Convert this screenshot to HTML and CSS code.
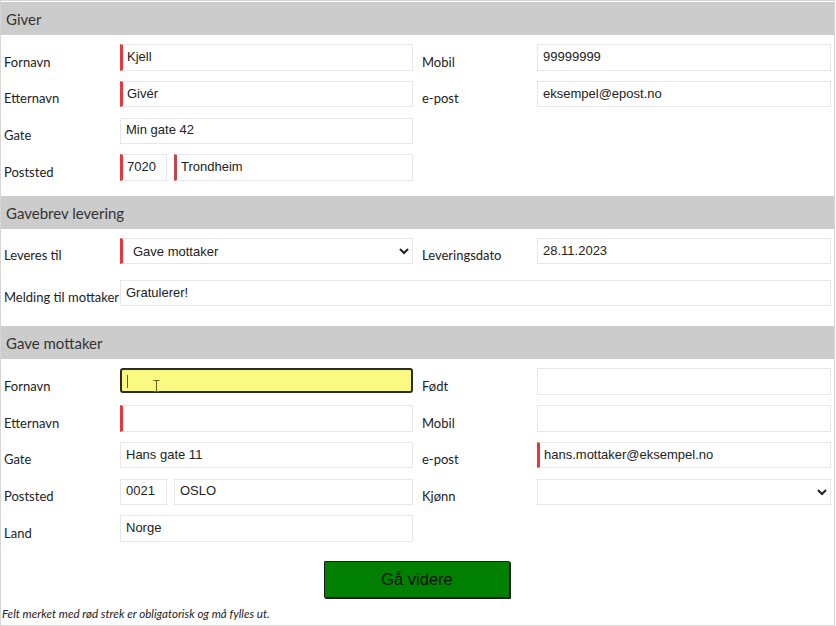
FILE: index.html
```html
<!DOCTYPE html>
<html lang="no">
<head>
<meta charset="utf-8">
<title>Gavebrev</title>
<link rel="stylesheet" href="styles.css">
</head>
<body>
<div class="sheet">
  <section class="sec">
    <h2 class="sec-title">Giver</h2>
    <div class="grid">
      <label class="lbl">Fornavn</label>
      <input class="fld req" type="text" value="Kjell">
      <label class="lbl lbl-r">Mobil</label>
      <input class="fld" type="text" value="99999999">

      <label class="lbl">Etternavn</label>
      <input class="fld req" type="text" value="Givér">
      <label class="lbl lbl-r">e-post</label>
      <input class="fld" type="text" value="eksempel@epost.no">

      <label class="lbl">Gate</label>
      <input class="fld" type="text" value="Min gate 42">

      <label class="lbl">Poststed</label>
      <div class="post">
        <input class="fld req zip" type="text" value="7020">
        <input class="fld req req-dark" type="text" value="Trondheim">
      </div>
    </div>
  </section>

  <section class="sec">
    <h2 class="sec-title">Gavebrev levering</h2>
    <div class="grid grid-lev">
      <label class="lbl">Leveres til</label>
      <select class="fld sel req">
        <option>Gave mottaker</option>
      </select>
      <label class="lbl lbl-r">Leveringsdato</label>
      <input class="fld" type="text" value="28.11.2023">

      <label class="lbl lbl-wide">Melding til mottaker</label>
      <input class="fld wide" type="text" value="Gratulerer!">
    </div>
  </section>

  <section class="sec">
    <h2 class="sec-title">Gave mottaker</h2>
    <div class="grid grid-mot">
      <label class="lbl">Fornavn</label>
      <div class="fld focus req">
        <span class="caret"></span>
        <svg class="ibeam" width="7" height="12" viewBox="0 0 7 12"><path d="M0.5 0.5h6M3.5 0.5v11M0.5 11.5h6" stroke="#6b5a1a" stroke-width="1" fill="none"/></svg>
      </div>
      <label class="lbl lbl-r">Født</label>
      <input class="fld" type="text" value="">

      <label class="lbl">Etternavn</label>
      <input class="fld req" type="text" value="">
      <label class="lbl lbl-r">Mobil</label>
      <input class="fld" type="text" value="">

      <label class="lbl">Gate</label>
      <input class="fld" type="text" value="Hans gate 11">
      <label class="lbl lbl-r">e-post</label>
      <input class="fld req" type="text" value="hans.mottaker@eksempel.no">

      <label class="lbl">Poststed</label>
      <div class="post">
        <input class="fld zip" type="text" value="0021">
        <input class="fld" type="text" value="OSLO">
      </div>
      <label class="lbl lbl-r">Kjønn</label>
      <select class="fld sel">
        <option></option>
      </select>

      <label class="lbl">Land</label>
      <input class="fld" type="text" value="Norge">
    </div>
  </section>

  <div class="actions">
    <button class="btn" type="button">Gå videre</button>
  </div>
  <p class="note">Felt merket med rød strek er obligatorisk og må fylles ut.</p>
</div>
</body>
</html>
```
FILE: styles.css
```css
html, body {
  margin: 0;
  padding: 0;
  background: #fff;
}

.sheet {
  width: 835px;
  height: 626px;
  box-sizing: border-box;
  border: 1px solid #d6d6d6;
  padding-top: 1px;
  font-family: Lato, "Open Sans", sans-serif;
  color: #222;
  overflow: hidden;
}

.sec-title {
  margin: 0;
  height: 33px;
  line-height: 35px;
  padding-left: 5px;
  background: #cccccc;
  font-size: 15px;
  font-weight: normal;
  color: #333;
}

.grid {
  display: grid;
  grid-template-columns: 116px 293px 124px 294px;
  grid-auto-rows: 26.5px;
  row-gap: 10.2px;
  padding: 9.3px 2px 15.1px 3px;
}

.grid-lev {
  row-gap: 15.5px;
  padding-top: 9px;
  padding-bottom: 20px;
}

.grid-mot {
  padding-top: 9px;
  padding-bottom: 0;
}

.lbl {
  grid-column: 1;
  align-self: end;
  font-size: 13px;
  line-height: 16px;
  padding-bottom: 1px;
  padding-left: 0;
  white-space: nowrap;
  color: #222;
}

.lbl-r {
  grid-column: 3;
  padding-left: 9px;
}

.fld {
  box-sizing: border-box;
  width: 100%;
  height: 100%;
  margin: 0;
  border: 1px solid #e7e7e7;
  padding: 0 4px 2px 5px;
  font-family: "Liberation Sans", Arial, sans-serif;
  font-size: 13px;
  color: #222;
  background: #fff;
  outline: none;
  border-radius: 0;
}

.req {
  border-left: 3px solid #e2383e;
  padding-left: 4px;
}

.req-dark {
  border-left-color: #c0474a;
}

.wide {
  grid-column: 2 / 5;
}

.post {
  display: flex;
  gap: 7px;
  min-width: 0;
}

.post .fld {
  flex: 1;
  min-width: 0;
}

.post .zip {
  flex: 0 0 47px;
}

.sel {
  padding-left: 6px;
  padding-bottom: 0;
}

.focus {
  position: relative;
  background: #fafa82;
  border: 2px solid #2b2b2b;
  border-left: 2px solid #2b2b2b;
  border-radius: 3px;
  height: 25px;
}

.caret {
  position: absolute;
  left: 5px;
  top: 5px;
  width: 1px;
  height: 13px;
  background: #555;
}

.ibeam {
  position: absolute;
  left: 31px;
  top: 10px;
}

.actions {
  display: flex;
  justify-content: center;
  padding-top: 19px;
  padding-right: 1px;
}

.btn {
  width: 186px;
  height: 37px;
  background: #008000;
  border: 1px solid #1e1e1e;
  box-shadow: 1px 1px 0 #1e1e1e;
  border-radius: 1px;
  font-family: "Liberation Sans", Arial, sans-serif;
  font-size: 16.5px;
  color: #111;
  padding: 0;
}

.note {
  margin: 8px 0 0 1px;
  font-size: 11.6px;
  font-style: italic;
  line-height: 15px;
  color: #222;
}
```
